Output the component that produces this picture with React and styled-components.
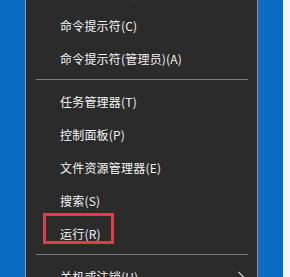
import React from 'react'
import styled, { createGlobalStyle } from 'styled-components'

const GlobalStyle = createGlobalStyle`
  html, body {
    margin: 0;
    padding: 0;
    background: #0a6cc1;
    overflow: hidden;
  }
`

const Screen = styled.div`
  display: flex;
  width: 290px;
  height: 277px;
  overflow: hidden;
  background: #0a6cc1;
  font-family: "Noto Sans CJK SC", "Noto Sans", sans-serif;
`

const Desktop = styled.div`
  width: ${(p) => p.w}px;
  flex-shrink: 0;
  background: ${(p) => p.bg || '#0a6cc1'};
`

const Menu = styled.div`
  width: 231px;
  flex-shrink: 0;
  background: #2b2b2b;
  border-left: 1px solid #8a9aa8;
  border-right: 1px solid #8e8e8e;
  margin-top: -24px;
  display: flex;
  flex-direction: column;
  align-self: flex-start;
`

const Item = styled.div`
  position: relative;
  height: 33px;
  display: flex;
  align-items: center;
  padding-left: 34px;
  padding-right: 12px;
  color: #f4f4f4;
  font-size: 12px;
  letter-spacing: 0.2px;
  white-space: nowrap;
`

const Label = styled.span`
  flex: 1;
`

const Separator = styled.div`
  height: 10px;
  display: flex;
  align-items: center;
  padding: 0 9px 0 10px;
  &::after {
    content: '';
    flex: 1;
    height: 1px;
    margin-top: -1px;
    background: #7c7c7c;
  }
`

const Highlight = styled.div`
  position: absolute;
  left: 17px;
  top: -4px;
  width: 65px;
  height: 25px;
  border: 3px solid #d8404a;
`

const Chevron = () => (
  <svg width="8" height="12" viewBox="0 0 8 12">
    <path d="M1.5 1 L6.5 6 L1.5 11" fill="none" stroke="#d8d8d8" strokeWidth="1.1" />
  </svg>
)

function App() {
  return (
    <>
      <GlobalStyle />
      <Screen>
        <Desktop w={25} />
        <Menu>
          <Item><Label>计算机管理(G)</Label></Item>
          <Item><Label>命令提示符(C)</Label></Item>
          <Item><Label>命令提示符(管理员)(A)</Label></Item>
          <Separator />
          <Item><Label>任务管理器(T)</Label></Item>
          <Item><Label>控制面板(P)</Label></Item>
          <Item><Label>文件资源管理器(E)</Label></Item>
          <Item><Label>搜索(S)</Label></Item>
          <Item>
            <Highlight />
            <Label>运行(R)</Label>
          </Item>
          <Separator />
          <Item><Label>关机或注销(U)</Label><Chevron /></Item>
        </Menu>
        <Desktop w={25} />
        <Desktop w={7} bg="#f4f6f8" />
      </Screen>
    </>
  )
}

export default App
